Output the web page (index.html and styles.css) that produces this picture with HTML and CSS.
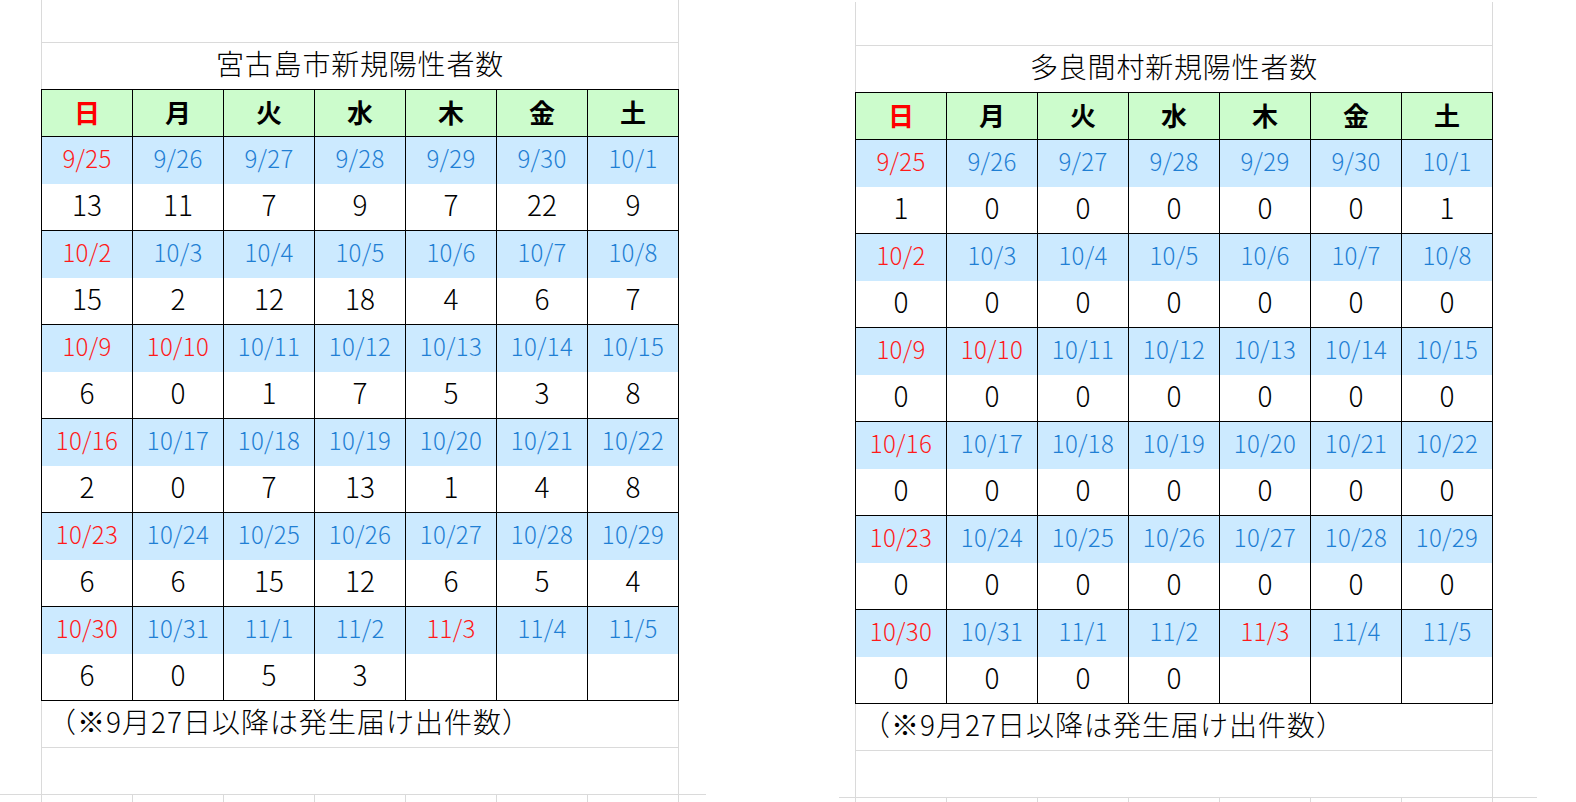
FILE: index.html
```html
<!DOCTYPE html>
<html lang="ja">
<head>
<meta charset="utf-8">
<title>新規陽性者数</title>
<link rel="stylesheet" href="styles.css">
</head>
<body>
<div class="page">
  <section class="sheet sheet-a">
    <div class="gap-row top"></div>
    <div class="title-row">宮古島市新規陽性者数</div>
    <table class="cal">
      <tr class="head"><td class="sun">日</td><td>月</td><td>火</td><td>水</td><td>木</td><td>金</td><td>土</td></tr>
      <tr class="date"><td class="red">9/25</td><td>9/26</td><td>9/27</td><td>9/28</td><td>9/29</td><td>9/30</td><td>10/1</td></tr>
      <tr class="num"><td>13</td><td>11</td><td>7</td><td>9</td><td>7</td><td>22</td><td>9</td></tr>
      <tr class="date"><td class="red">10/2</td><td>10/3</td><td>10/4</td><td>10/5</td><td>10/6</td><td>10/7</td><td>10/8</td></tr>
      <tr class="num"><td>15</td><td>2</td><td>12</td><td>18</td><td>4</td><td>6</td><td>7</td></tr>
      <tr class="date"><td class="red">10/9</td><td class="red">10/10</td><td>10/11</td><td>10/12</td><td>10/13</td><td>10/14</td><td>10/15</td></tr>
      <tr class="num"><td>6</td><td>0</td><td>1</td><td>7</td><td>5</td><td>3</td><td>8</td></tr>
      <tr class="date"><td class="red">10/16</td><td>10/17</td><td>10/18</td><td>10/19</td><td>10/20</td><td>10/21</td><td>10/22</td></tr>
      <tr class="num"><td>2</td><td>0</td><td>7</td><td>13</td><td>1</td><td>4</td><td>8</td></tr>
      <tr class="date"><td class="red">10/23</td><td>10/24</td><td>10/25</td><td>10/26</td><td>10/27</td><td>10/28</td><td>10/29</td></tr>
      <tr class="num"><td>6</td><td>6</td><td>15</td><td>12</td><td>6</td><td>5</td><td>4</td></tr>
      <tr class="date"><td class="red">10/30</td><td>10/31</td><td>11/1</td><td>11/2</td><td class="red">11/3</td><td>11/4</td><td>11/5</td></tr>
      <tr class="num"><td>6</td><td>0</td><td>5</td><td>3</td><td></td><td></td><td></td></tr>
    </table>
    <div class="note-row">（※9月27日以降は発生届け出件数）</div>
    <div class="gap-row"></div>
    <div class="foot"><div class="ticks"><span></span><span></span><span></span><span></span><span></span><span></span><span></span></div></div>
  </section>

  <section class="sheet sheet-b">
    <div class="gap-row top"></div>
    <div class="title-row">多良間村新規陽性者数</div>
    <table class="cal">
      <tr class="head"><td class="sun">日</td><td>月</td><td>火</td><td>水</td><td>木</td><td>金</td><td>土</td></tr>
      <tr class="date"><td class="red">9/25</td><td>9/26</td><td>9/27</td><td>9/28</td><td>9/29</td><td>9/30</td><td>10/1</td></tr>
      <tr class="num"><td>1</td><td>0</td><td>0</td><td>0</td><td>0</td><td>0</td><td>1</td></tr>
      <tr class="date"><td class="red">10/2</td><td>10/3</td><td>10/4</td><td>10/5</td><td>10/6</td><td>10/7</td><td>10/8</td></tr>
      <tr class="num"><td>0</td><td>0</td><td>0</td><td>0</td><td>0</td><td>0</td><td>0</td></tr>
      <tr class="date"><td class="red">10/9</td><td class="red">10/10</td><td>10/11</td><td>10/12</td><td>10/13</td><td>10/14</td><td>10/15</td></tr>
      <tr class="num"><td>0</td><td>0</td><td>0</td><td>0</td><td>0</td><td>0</td><td>0</td></tr>
      <tr class="date"><td class="red">10/16</td><td>10/17</td><td>10/18</td><td>10/19</td><td>10/20</td><td>10/21</td><td>10/22</td></tr>
      <tr class="num"><td>0</td><td>0</td><td>0</td><td>0</td><td>0</td><td>0</td><td>0</td></tr>
      <tr class="date"><td class="red">10/23</td><td>10/24</td><td>10/25</td><td>10/26</td><td>10/27</td><td>10/28</td><td>10/29</td></tr>
      <tr class="num"><td>0</td><td>0</td><td>0</td><td>0</td><td>0</td><td>0</td><td>0</td></tr>
      <tr class="date"><td class="red">10/30</td><td>10/31</td><td>11/1</td><td>11/2</td><td class="red">11/3</td><td>11/4</td><td>11/5</td></tr>
      <tr class="num"><td>0</td><td>0</td><td>0</td><td>0</td><td></td><td></td><td></td></tr>
    </table>
    <div class="note-row">（※9月27日以降は発生届け出件数）</div>
    <div class="gap-row"></div>
    <div class="foot"><div class="ticks"><span></span><span></span><span></span><span></span><span></span><span></span><span></span></div></div>
  </section>
</div>
</body>
</html>
```

FILE: styles.css
```css
html, body {
  margin: 0;
  padding: 0;
  background: #ffffff;
}
body {
  width: 1576px;
  height: 802px;
  overflow: hidden;
  font-family: "Noto Sans CJK JP", "Noto Sans", sans-serif;
  color: #000;
}
.page {
  display: flex;
  align-items: flex-start;
  column-gap: 176px;
  padding-left: 41px;
}
.sheet {
  width: 638px;
  display: flex;
  flex-direction: column;
}
.sheet-b {
  margin-top: 2px;
}
.gap-row {
  box-sizing: border-box;
  height: 46px;
  border-left: 1px solid #dadada;
  border-right: 1px solid #dadada;
}
.gap-row.top {
  height: 42px;
}
.sheet-b .gap-row.top {
  height: 43px;
}
.title-row {
  box-sizing: border-box;
  height: 47px;
  border-top: 1px solid #dadada;
  border-left: 1px solid #dadada;
  border-right: 1px solid #dadada;
  display: flex;
  align-items: center;
  justify-content: center;
  font-size: 28px;
  font-weight: 300;
  letter-spacing: 0.8px;
  line-height: 1;
  padding-bottom: 6px;
}
.cal {
  border-collapse: separate;
  border-spacing: 0;
  border: 1px solid #000;
  border-bottom: 0;
  table-layout: fixed;
  width: 638px;
}
.cal td {
  box-sizing: border-box;
  width: 90px;
  padding: 0;
  text-align: center;
  vertical-align: middle;
  line-height: 1;
}
.cal td + td {
  width: 91px;
  border-left: 1px solid #000;
}
.head td {
  height: 47px;
  background: #ccfccc;
  border-bottom: 1px solid #000;
  font-size: 26px;
  font-weight: 700;
  padding-bottom: 3px;
}
.head td.sun {
  color: #ff0000;
}
.date td {
  height: 47px;
  background: #cceaff;
  color: #1f7fd4;
  font-size: 24px;
  font-weight: 300;
  letter-spacing: 0.3px;
  padding-bottom: 6px;
}
.date td.red {
  color: #ff1a1a;
}
.num td {
  height: 47px;
  border-bottom: 1px solid #000;
  font-size: 28px;
  font-weight: 300;
  padding-bottom: 6px;
}
.note-row {
  box-sizing: border-box;
  height: 47px;
  border-left: 1px solid #dadada;
  border-right: 1px solid #dadada;
  border-bottom: 1px solid #dadada;
  display: flex;
  align-items: center;
  padding-left: 6px;
  padding-bottom: 7px;
  font-size: 28px;
  font-weight: 300;
  letter-spacing: 1px;
  line-height: 1;
}
.foot {
  box-sizing: border-box;
  height: 20px;
  border-top: 1px solid #dadada;
}
.sheet-a .foot {
  margin-left: -41px;
  width: 706px;
  padding-left: 41px;
}
.sheet-b .foot {
  margin-left: -16px;
  width: 698px;
  padding-left: 16px;
}
.ticks {
  box-sizing: border-box;
  width: 638px;
  height: 100%;
  display: grid;
  grid-template-columns: repeat(7, 91px);
  border-right: 1px solid #dadada;
}
.ticks span {
  border-left: 1px solid #dadada;
}
```
